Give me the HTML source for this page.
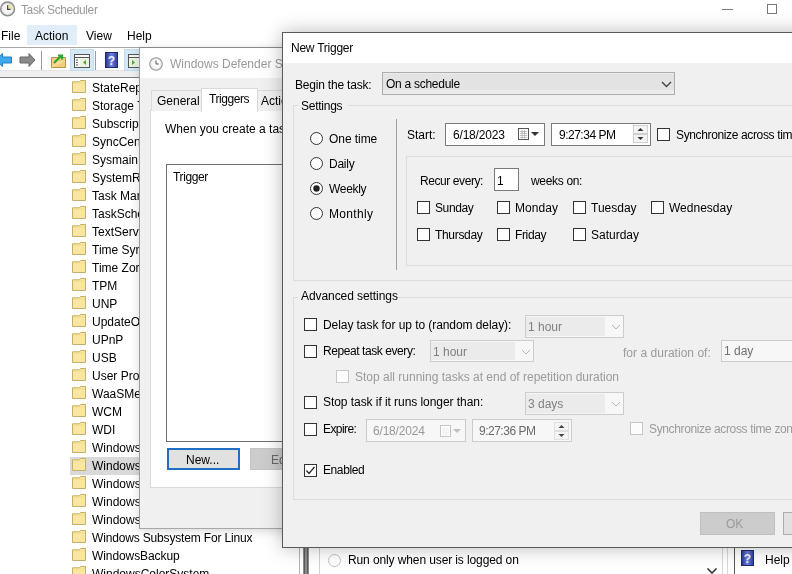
<!DOCTYPE html><html><head><meta charset="utf-8"><style>
html,body{margin:0;padding:0}
body{width:792px;height:574px;overflow:hidden;position:relative;background:#fff;font-family:"Liberation Sans",sans-serif}
.t{position:absolute;white-space:nowrap;will-change:transform;font-size:12px;line-height:14px;font-family:"Liberation Sans",sans-serif}
.z{position:absolute;overflow:hidden}
</style></head><body>
<svg style="position:absolute;left:0;top:1px" width="17" height="17"><circle cx="7.6" cy="7.9" r="6.9" fill="#dcdcdc" stroke="#8c8c8c" stroke-width="1.4"/><circle cx="7.6" cy="7.9" r="5.3" fill="#f4f4f4"/><path d="M7.6 2.8 A5.1 5.1 0 0 1 12.6 7.9 L7.6 7.9Z" fill="#e9e4a8"/><path d="M7.6 4.3 V8.3 H10.6" stroke="#4a4a4a" stroke-width="1.2" fill="none"/></svg>
<div class="t" style="left:21px;top:3px;color:#999;font-size:12px;letter-spacing:-0.396px;">Task Scheduler</div>
<div style="position:absolute;left:722px;top:9px;width:11px;height:1px;background:#7a7a7a"></div>
<div style="position:absolute;left:767px;top:4px;width:8px;height:8px;border:1px solid #7a7a7a"></div>
<div style="position:absolute;left:27px;top:25px;width:50px;height:20px;background:#e1eef9"></div>
<div class="t" style="left:1px;top:29px;color:#000;font-size:12px;">File</div>
<div class="t" style="left:35px;top:29px;color:#000;font-size:12px;">Action</div>
<div class="t" style="left:86px;top:29px;color:#000;font-size:12px;">View</div>
<div class="t" style="left:127px;top:29px;color:#000;font-size:12px;">Help</div>
<div style="position:absolute;left:0px;top:47px;width:792px;height:1px;background:#a8a8a8"></div>
<div style="position:absolute;left:0px;top:70px;width:792px;height:7px;background:#efefef"></div>
<div style="position:absolute;left:0px;top:77px;width:792px;height:1px;background:#7c7c7c"></div>
<div style="position:absolute;left:0px;top:70px;width:792px;height:1px;background:#e4e4e4"></div>
<svg style="position:absolute;left:-5px;top:52px" width="18" height="16"><path d="M0.5 8 L7.5 1.5 V5 H16.5 V11 H7.5 V14.5 Z" fill="#3ea8ec" stroke="#1a7fc8" stroke-width="1"/></svg>
<svg style="position:absolute;left:19px;top:52px" width="17" height="16"><path d="M16 8 L10 1.5 V5 H1 V11 H10 V14.5 Z" fill="#8a8a8a" stroke="#666" stroke-width="1"/></svg>
<div style="position:absolute;left:41px;top:51px;width:1px;height:19px;background:#9a9a9a"></div>
<svg style="position:absolute;left:51px;top:53px" width="15" height="15"><path d="M0.5 4.5 H14.5 V14.5 H0.5 Z" fill="#f2cf7d" stroke="#b8953e"/><path d="M0.5 14.5 L4 8 H14.5" fill="#f7dc9a" stroke="none"/><path d="M3 10 L10 3 M7 2.5 H11 V6.5" stroke="#2fa82f" stroke-width="2.2" fill="none"/></svg>
<div style="position:absolute;left:70px;top:49px;width:22px;height:20px;background:#d5e8f6;border:1px solid #c2dcf0"></div>
<svg style="position:absolute;left:74px;top:54px" width="17" height="14"><rect x="0.5" y="0.5" width="15" height="13" fill="#f8f8f8" stroke="#555"/><path d="M0.5 3.5 H15.5" stroke="#555"/><rect x="6" y="4.5" width="9" height="8.5" fill="#e8f3e0"/><path d="M12 6 L9 8.5 L12 11Z" fill="#5a9e3a"/><path d="M2 6 H4 M2 8.5 H4 M2 11 H4" stroke="#666"/></svg>
<div style="position:absolute;left:95px;top:51px;width:1px;height:19px;background:#9a9a9a"></div>
<svg style="position:absolute;left:105px;top:52px" width="13" height="16"><defs><linearGradient id="hg" x1="0" x2="1"><stop offset="0" stop-color="#27368a"/><stop offset="0.5" stop-color="#6f82dc"/><stop offset="1" stop-color="#2c3c96"/></linearGradient></defs><rect x="0.5" y="0.5" width="12" height="15" fill="url(#hg)" stroke="#1e2a70"/><text x="6.5" y="12.5" font-family="Liberation Sans" font-weight="bold" font-size="12" fill="#eef0ff" text-anchor="middle">?</text></svg>
<div style="position:absolute;left:124px;top:49px;width:22px;height:20px;background:#d5e8f6;border:1px solid #c2dcf0"></div>
<svg style="position:absolute;left:128px;top:54px" width="17" height="14"><rect x="0.5" y="0.5" width="15" height="13" fill="#f8f8f8" stroke="#555"/><path d="M0.5 3.5 H15.5" stroke="#555"/><rect x="1" y="4.5" width="9" height="8.5" fill="#e8f3e0"/><path d="M4 6 L7 8.5 L4 11Z" fill="#5a9e3a"/></svg>
<div style="position:absolute;left:70px;top:457px;width:70px;height:18px;background:#d9d9d9"></div>
<svg style="position:absolute;left:72px;top:80px" width="15" height="13"><path d="M0.5 1.8 H7.5 L8.5 0.5 H13.5 V12.5 H0.5 Z" fill="#f8e6a2" stroke="#c2b06a"/><path d="M1 3 H13" stroke="#efd987" stroke-width="0.8"/></svg>
<div class="t" style="left:92px;top:81px;color:#000;font-size:12px;">StateRep</div>
<svg style="position:absolute;left:72px;top:98px" width="15" height="13"><path d="M0.5 1.8 H7.5 L8.5 0.5 H13.5 V12.5 H0.5 Z" fill="#f8e6a2" stroke="#c2b06a"/><path d="M1 3 H13" stroke="#efd987" stroke-width="0.8"/></svg>
<div class="t" style="left:92px;top:99px;color:#000;font-size:12px;">Storage T</div>
<svg style="position:absolute;left:72px;top:116px" width="15" height="13"><path d="M0.5 1.8 H7.5 L8.5 0.5 H13.5 V12.5 H0.5 Z" fill="#f8e6a2" stroke="#c2b06a"/><path d="M1 3 H13" stroke="#efd987" stroke-width="0.8"/></svg>
<div class="t" style="left:92px;top:117px;color:#000;font-size:12px;">Subscript</div>
<svg style="position:absolute;left:72px;top:134px" width="15" height="13"><path d="M0.5 1.8 H7.5 L8.5 0.5 H13.5 V12.5 H0.5 Z" fill="#f8e6a2" stroke="#c2b06a"/><path d="M1 3 H13" stroke="#efd987" stroke-width="0.8"/></svg>
<div class="t" style="left:92px;top:135px;color:#000;font-size:12px;">SyncCen</div>
<svg style="position:absolute;left:72px;top:152px" width="15" height="13"><path d="M0.5 1.8 H7.5 L8.5 0.5 H13.5 V12.5 H0.5 Z" fill="#f8e6a2" stroke="#c2b06a"/><path d="M1 3 H13" stroke="#efd987" stroke-width="0.8"/></svg>
<div class="t" style="left:92px;top:153px;color:#000;font-size:12px;">Sysmain</div>
<svg style="position:absolute;left:72px;top:170px" width="15" height="13"><path d="M0.5 1.8 H7.5 L8.5 0.5 H13.5 V12.5 H0.5 Z" fill="#f8e6a2" stroke="#c2b06a"/><path d="M1 3 H13" stroke="#efd987" stroke-width="0.8"/></svg>
<div class="t" style="left:92px;top:171px;color:#000;font-size:12px;">SystemR</div>
<svg style="position:absolute;left:72px;top:188px" width="15" height="13"><path d="M0.5 1.8 H7.5 L8.5 0.5 H13.5 V12.5 H0.5 Z" fill="#f8e6a2" stroke="#c2b06a"/><path d="M1 3 H13" stroke="#efd987" stroke-width="0.8"/></svg>
<div class="t" style="left:92px;top:189px;color:#000;font-size:12px;">Task Mar</div>
<svg style="position:absolute;left:72px;top:206px" width="15" height="13"><path d="M0.5 1.8 H7.5 L8.5 0.5 H13.5 V12.5 H0.5 Z" fill="#f8e6a2" stroke="#c2b06a"/><path d="M1 3 H13" stroke="#efd987" stroke-width="0.8"/></svg>
<div class="t" style="left:92px;top:207px;color:#000;font-size:12px;">TaskSche</div>
<svg style="position:absolute;left:72px;top:224px" width="15" height="13"><path d="M0.5 1.8 H7.5 L8.5 0.5 H13.5 V12.5 H0.5 Z" fill="#f8e6a2" stroke="#c2b06a"/><path d="M1 3 H13" stroke="#efd987" stroke-width="0.8"/></svg>
<div class="t" style="left:92px;top:225px;color:#000;font-size:12px;">TextServi</div>
<svg style="position:absolute;left:72px;top:242px" width="15" height="13"><path d="M0.5 1.8 H7.5 L8.5 0.5 H13.5 V12.5 H0.5 Z" fill="#f8e6a2" stroke="#c2b06a"/><path d="M1 3 H13" stroke="#efd987" stroke-width="0.8"/></svg>
<div class="t" style="left:92px;top:243px;color:#000;font-size:12px;">Time Syn</div>
<svg style="position:absolute;left:72px;top:260px" width="15" height="13"><path d="M0.5 1.8 H7.5 L8.5 0.5 H13.5 V12.5 H0.5 Z" fill="#f8e6a2" stroke="#c2b06a"/><path d="M1 3 H13" stroke="#efd987" stroke-width="0.8"/></svg>
<div class="t" style="left:92px;top:261px;color:#000;font-size:12px;">Time Zor</div>
<svg style="position:absolute;left:72px;top:278px" width="15" height="13"><path d="M0.5 1.8 H7.5 L8.5 0.5 H13.5 V12.5 H0.5 Z" fill="#f8e6a2" stroke="#c2b06a"/><path d="M1 3 H13" stroke="#efd987" stroke-width="0.8"/></svg>
<div class="t" style="left:92px;top:279px;color:#000;font-size:12px;">TPM</div>
<svg style="position:absolute;left:72px;top:296px" width="15" height="13"><path d="M0.5 1.8 H7.5 L8.5 0.5 H13.5 V12.5 H0.5 Z" fill="#f8e6a2" stroke="#c2b06a"/><path d="M1 3 H13" stroke="#efd987" stroke-width="0.8"/></svg>
<div class="t" style="left:92px;top:297px;color:#000;font-size:12px;">UNP</div>
<svg style="position:absolute;left:72px;top:314px" width="15" height="13"><path d="M0.5 1.8 H7.5 L8.5 0.5 H13.5 V12.5 H0.5 Z" fill="#f8e6a2" stroke="#c2b06a"/><path d="M1 3 H13" stroke="#efd987" stroke-width="0.8"/></svg>
<div class="t" style="left:92px;top:315px;color:#000;font-size:12px;">UpdateO</div>
<svg style="position:absolute;left:72px;top:332px" width="15" height="13"><path d="M0.5 1.8 H7.5 L8.5 0.5 H13.5 V12.5 H0.5 Z" fill="#f8e6a2" stroke="#c2b06a"/><path d="M1 3 H13" stroke="#efd987" stroke-width="0.8"/></svg>
<div class="t" style="left:92px;top:333px;color:#000;font-size:12px;">UPnP</div>
<svg style="position:absolute;left:72px;top:350px" width="15" height="13"><path d="M0.5 1.8 H7.5 L8.5 0.5 H13.5 V12.5 H0.5 Z" fill="#f8e6a2" stroke="#c2b06a"/><path d="M1 3 H13" stroke="#efd987" stroke-width="0.8"/></svg>
<div class="t" style="left:92px;top:351px;color:#000;font-size:12px;">USB</div>
<svg style="position:absolute;left:72px;top:368px" width="15" height="13"><path d="M0.5 1.8 H7.5 L8.5 0.5 H13.5 V12.5 H0.5 Z" fill="#f8e6a2" stroke="#c2b06a"/><path d="M1 3 H13" stroke="#efd987" stroke-width="0.8"/></svg>
<div class="t" style="left:92px;top:369px;color:#000;font-size:12px;">User Prof</div>
<svg style="position:absolute;left:72px;top:386px" width="15" height="13"><path d="M0.5 1.8 H7.5 L8.5 0.5 H13.5 V12.5 H0.5 Z" fill="#f8e6a2" stroke="#c2b06a"/><path d="M1 3 H13" stroke="#efd987" stroke-width="0.8"/></svg>
<div class="t" style="left:92px;top:387px;color:#000;font-size:12px;">WaaSMe</div>
<svg style="position:absolute;left:72px;top:404px" width="15" height="13"><path d="M0.5 1.8 H7.5 L8.5 0.5 H13.5 V12.5 H0.5 Z" fill="#f8e6a2" stroke="#c2b06a"/><path d="M1 3 H13" stroke="#efd987" stroke-width="0.8"/></svg>
<div class="t" style="left:92px;top:405px;color:#000;font-size:12px;">WCM</div>
<svg style="position:absolute;left:72px;top:422px" width="15" height="13"><path d="M0.5 1.8 H7.5 L8.5 0.5 H13.5 V12.5 H0.5 Z" fill="#f8e6a2" stroke="#c2b06a"/><path d="M1 3 H13" stroke="#efd987" stroke-width="0.8"/></svg>
<div class="t" style="left:92px;top:423px;color:#000;font-size:12px;">WDI</div>
<svg style="position:absolute;left:72px;top:440px" width="15" height="13"><path d="M0.5 1.8 H7.5 L8.5 0.5 H13.5 V12.5 H0.5 Z" fill="#f8e6a2" stroke="#c2b06a"/><path d="M1 3 H13" stroke="#efd987" stroke-width="0.8"/></svg>
<div class="t" style="left:92px;top:441px;color:#000;font-size:12px;">Windows</div>
<svg style="position:absolute;left:72px;top:458px" width="15" height="13"><path d="M0.5 1.8 H7.5 L8.5 0.5 H13.5 V12.5 H0.5 Z" fill="#f8e6a2" stroke="#c2b06a"/><path d="M1 3 H13" stroke="#efd987" stroke-width="0.8"/></svg>
<div class="t" style="left:92px;top:459px;color:#000;font-size:12px;">Windows</div>
<svg style="position:absolute;left:72px;top:476px" width="15" height="13"><path d="M0.5 1.8 H7.5 L8.5 0.5 H13.5 V12.5 H0.5 Z" fill="#f8e6a2" stroke="#c2b06a"/><path d="M1 3 H13" stroke="#efd987" stroke-width="0.8"/></svg>
<div class="t" style="left:92px;top:477px;color:#000;font-size:12px;">Windows</div>
<svg style="position:absolute;left:72px;top:494px" width="15" height="13"><path d="M0.5 1.8 H7.5 L8.5 0.5 H13.5 V12.5 H0.5 Z" fill="#f8e6a2" stroke="#c2b06a"/><path d="M1 3 H13" stroke="#efd987" stroke-width="0.8"/></svg>
<div class="t" style="left:92px;top:495px;color:#000;font-size:12px;">Windows</div>
<svg style="position:absolute;left:72px;top:512px" width="15" height="13"><path d="M0.5 1.8 H7.5 L8.5 0.5 H13.5 V12.5 H0.5 Z" fill="#f8e6a2" stroke="#c2b06a"/><path d="M1 3 H13" stroke="#efd987" stroke-width="0.8"/></svg>
<div class="t" style="left:92px;top:513px;color:#000;font-size:12px;">Windows</div>
<svg style="position:absolute;left:72px;top:530px" width="15" height="13"><path d="M0.5 1.8 H7.5 L8.5 0.5 H13.5 V12.5 H0.5 Z" fill="#f8e6a2" stroke="#c2b06a"/><path d="M1 3 H13" stroke="#efd987" stroke-width="0.8"/></svg>
<div class="t" style="left:92px;top:531px;color:#000;font-size:12px;letter-spacing:-0.164px;">Windows Subsystem For Linux</div>
<svg style="position:absolute;left:72px;top:548px" width="15" height="13"><path d="M0.5 1.8 H7.5 L8.5 0.5 H13.5 V12.5 H0.5 Z" fill="#f8e6a2" stroke="#c2b06a"/><path d="M1 3 H13" stroke="#efd987" stroke-width="0.8"/></svg>
<div class="t" style="left:92px;top:549px;color:#000;font-size:12px;letter-spacing:-0.086px;">WindowsBackup</div>
<svg style="position:absolute;left:72px;top:566px" width="15" height="13"><path d="M0.5 1.8 H7.5 L8.5 0.5 H13.5 V12.5 H0.5 Z" fill="#f8e6a2" stroke="#c2b06a"/><path d="M1 3 H13" stroke="#efd987" stroke-width="0.8"/></svg>
<div class="t" style="left:92px;top:567px;color:#000;font-size:12px;">WindowsColorSystem</div>
<div style="position:absolute;left:299px;top:547px;width:1px;height:27px;background:#b4b4b4"></div>
<div style="position:absolute;left:303px;top:547px;width:6px;height:27px;background:#8c8c8c"></div>
<div style="position:absolute;left:304px;top:547px;width:1px;height:27px;background:#5a5a5a"></div>
<div style="position:absolute;left:307px;top:547px;width:1px;height:27px;background:#5a5a5a"></div>
<div style="position:absolute;left:319px;top:547px;width:1px;height:27px;background:#d0d0d0"></div>
<svg style="position:absolute;left:328px;top:554px" width="13" height="13"><circle cx="6.5" cy="6.5" r="6" fill="#fff" stroke="#c0c0c0" stroke-width="1"/></svg>
<div class="t" style="left:348px;top:553px;color:#000;font-size:12px;letter-spacing:-0.110px;">Run only when user is logged on</div>
<div style="position:absolute;left:722px;top:547px;width:1px;height:27px;background:#d8d8d8"></div>
<div style="position:absolute;left:727px;top:547px;width:1px;height:27px;background:#d8d8d8"></div>
<div style="position:absolute;left:734px;top:547px;width:1px;height:27px;background:#555"></div>
<svg style="position:absolute;left:706px;top:567px" width="12" height="8"><path d="M1.5 1.5 L6 6 L10.5 1.5" stroke="#333" stroke-width="1.6" fill="none"/></svg>
<svg style="position:absolute;left:741px;top:550px" width="13" height="16"><defs><linearGradient id="hg" x1="0" x2="1"><stop offset="0" stop-color="#27368a"/><stop offset="0.5" stop-color="#6f82dc"/><stop offset="1" stop-color="#2c3c96"/></linearGradient></defs><rect x="0.5" y="0.5" width="12" height="15" fill="url(#hg)" stroke="#1e2a70"/><text x="6.5" y="12.5" font-family="Liberation Sans" font-weight="bold" font-size="12" fill="#eef0ff" text-anchor="middle">?</text></svg>
<div class="t" style="left:765px;top:553px;color:#000;font-size:12px;">Help</div>
<div class="z" style="left:139px;top:47px;width:660px;height:480px;background:#f0f0f0;border-left:1px solid #9c9c9c;border-top:1px solid #8a8a8a;border-bottom:1px solid #a8a8a8;box-shadow:0 2px 9px rgba(0,0,0,0.16)">
<div style="position:absolute;left:0;top:0;width:100%;height:30px;background:#fff"></div>
<svg style="position:absolute;left:9px;top:9px" width="15" height="15"><circle cx="7" cy="7" r="6.3" fill="#e8e8e8" stroke="#9a9a9a" stroke-width="1.1"/><circle cx="7" cy="7" r="4.8" fill="#fafafa"/><path d="M7 3.5 V7 H9.8" stroke="#555" stroke-width="1" fill="none"/></svg>
<div class="t" style="left:30px;top:9px;color:#999;">Windows Defender Scheduled Scan</div>
<div style="position:absolute;left:10px;top:62px;width:600px;height:376px;background:#fff;border:1px solid #d9d9d9"></div>
<div style="position:absolute;left:11px;top:42px;width:50px;height:20px;background:#f0f0f0;border:1px solid #d9d9d9;border-bottom:none"></div>
<div style="position:absolute;left:117px;top:42px;width:60px;height:20px;background:#f0f0f0;border:1px solid #d9d9d9;border-bottom:none"></div>
<div style="position:absolute;left:61px;top:40px;width:55px;height:23px;background:#fff;border:1px solid #d9d9d9;border-bottom:none"></div>
<div class="t" style="left:17px;top:46px;color:#000;">General</div>
<div class="t" style="left:69px;top:44px;color:#000;letter-spacing:-0.447px;">Triggers</div>
<div class="t" style="left:121px;top:46px;color:#000;">Actions</div>
<div class="t" style="left:25px;top:74px;color:#000;">When you create a task, you can</div>
<div style="position:absolute;left:26px;top:116px;width:600px;height:276px;background:#fff;border:1px solid #6f6f6f"></div>
<div class="t" style="left:33px;top:122px;color:#000;letter-spacing:-0.368px;">Trigger</div>
<div style="position:absolute;left:27px;top:400px;width:73px;height:22px;background:#e1e1e1;border:2px solid #1f6fc5;box-sizing:border-box"></div>
<div class="t" style="left:46px;top:405px;color:#000;">New...</div>
<div style="position:absolute;left:110px;top:400px;width:80px;height:22px;background:#cccccc;border:1px solid #c4c4c4;box-sizing:border-box"></div>
<div class="t" style="left:131px;top:405px;color:#666;">Edit...</div>
</div>
<div class="z" style="left:282px;top:32px;width:560px;height:514px;background:#f0f0f0;border:1px solid #5a5a5a;box-shadow:0 0 18px rgba(0,0,0,0.28)">
<div style="position:absolute;left:0px;top:0px;width:560px;height:30px;background:#fff"></div>
<div class="t" style="left:8px;top:8px;color:#000;letter-spacing:-0.244px;">New Trigger</div>
<div class="t" style="left:12px;top:45px;color:#000;letter-spacing:-0.199px;">Begin the task:</div>
<div style="position:absolute;left:99px;top:39px;width:293px;height:23px;background:#e3e3e3;border:1px solid #adadad;box-sizing:border-box;box-shadow:inset 0 1px 0 #ececec, inset 0 -4px 0 #ebebeb"></div>
<div class="t" style="left:103px;top:44px;color:#000;letter-spacing:-0.269px;">On a schedule</div>
<svg style="position:absolute;left:378px;top:48px" width="11" height="7"><path d="M1 1 L5.5 5.5 L10 1" stroke="#444" stroke-width="1.4" fill="none"/></svg>
<div style="position:absolute;left:10px;top:72px;width:520px;height:176px;border:1px solid #dcdcdc;box-sizing:border-box"></div>
<div style="position:absolute;left:15px;top:65px;width:50px;height:14px;background:#f0f0f0"></div>
<div class="t" style="left:18px;top:66px;color:#000;letter-spacing:-0.257px;">Settings</div>
<svg style="position:absolute;left:27px;top:99px" width="13" height="13"><circle cx="6.5" cy="6.5" r="6" fill="#fff" stroke="#333" stroke-width="1"/></svg>
<div class="t" style="left:46px;top:99px;color:#000;letter-spacing:-0.061px;">One time</div>
<svg style="position:absolute;left:27px;top:124px" width="13" height="13"><circle cx="6.5" cy="6.5" r="6" fill="#fff" stroke="#333" stroke-width="1"/></svg>
<div class="t" style="left:46px;top:124px;color:#000;letter-spacing:-0.254px;">Daily</div>
<svg style="position:absolute;left:27px;top:149px" width="13" height="13"><circle cx="6.5" cy="6.5" r="6" fill="#fff" stroke="#333" stroke-width="1"/><circle cx="6.5" cy="6.5" r="3.2" fill="#222"/></svg>
<div class="t" style="left:46px;top:149px;color:#000;letter-spacing:-0.321px;">Weekly</div>
<svg style="position:absolute;left:27px;top:174px" width="13" height="13"><circle cx="6.5" cy="6.5" r="6" fill="#fff" stroke="#333" stroke-width="1"/></svg>
<div class="t" style="left:46px;top:174px;color:#000;letter-spacing:0.324px;">Monthly</div>
<div style="position:absolute;left:113px;top:86px;width:1px;height:151px;background:#a0a0a0"></div>
<div class="t" style="left:124px;top:95px;color:#000;">Start:</div>
<div style="position:absolute;left:162px;top:90px;width:100px;height:23px;background:#fff;border:1px solid #7a7a7a;box-sizing:border-box"></div>
<div class="t" style="left:170px;top:95px;color:#000;letter-spacing:-0.188px;">6/18/2023</div>
<svg style="position:absolute;left:235px;top:95px" width="12" height="13"><rect x="0.5" y="0.5" width="10" height="11" fill="#fff" stroke="#555"/><path d="M2 3.5 H9 M2 5.5 H9 M2 7.5 H9 M2 9.5 H9 M4 2 V10.5 M6.5 2 V10.5" stroke="#b0b0b0" stroke-width="0.8"/></svg>
<svg style="position:absolute;left:248px;top:99px" width="9" height="5"><path d="M0 0 H8 L4 4Z" fill="#333"/></svg>
<div style="position:absolute;left:268px;top:90px;width:100px;height:23px;background:#fff;border:1px solid #7a7a7a;box-sizing:border-box"></div>
<div class="t" style="left:276px;top:95px;color:#000;letter-spacing:-0.498px;">9:27:34 PM</div>
<svg style="position:absolute;left:350px;top:92px" width="16" height="18"><rect x="0.5" y="0.5" width="14" height="8" fill="#f4f4f4" stroke="#cfcfcf"/><rect x="0.5" y="9.5" width="14" height="8" fill="#f4f4f4" stroke="#cfcfcf"/><path d="M4.5 6 H10.5 L7.5 3Z" fill="#333"/><path d="M4.5 12 H10.5 L7.5 15Z" fill="#333"/></svg>
<div style="position:absolute;left:374px;top:95px;width:11px;height:11px;border:1px solid #333;background:#fff"></div>
<div class="t" style="left:393px;top:95px;color:#000;letter-spacing:-0.361px;">Synchronize across time zones</div>
<div style="position:absolute;left:123px;top:123px;width:420px;height:110px;border:1px solid #dcdcdc;box-sizing:border-box"></div>
<div class="t" style="left:137px;top:141px;color:#000;letter-spacing:-0.419px;">Recur every:</div>
<div style="position:absolute;left:211px;top:135px;width:25px;height:23px;background:#fff;border:1px solid #7a7a7a;box-sizing:border-box"></div>
<div class="t" style="left:214px;top:141px;color:#000;">1</div>
<div class="t" style="left:248px;top:141px;color:#000;letter-spacing:-0.326px;">weeks on:</div>
<div style="position:absolute;left:134px;top:168px;width:11px;height:11px;border:1px solid #333;background:#fff"></div>
<div class="t" style="left:152px;top:168px;color:#000;letter-spacing:-0.401px;">Sunday</div>
<div style="position:absolute;left:214px;top:168px;width:11px;height:11px;border:1px solid #333;background:#fff"></div>
<div class="t" style="left:232px;top:168px;color:#000;letter-spacing:0.083px;">Monday</div>
<div style="position:absolute;left:290px;top:168px;width:11px;height:11px;border:1px solid #333;background:#fff"></div>
<div class="t" style="left:308px;top:168px;color:#000;">Tuesday</div>
<div style="position:absolute;left:368px;top:168px;width:11px;height:11px;border:1px solid #333;background:#fff"></div>
<div class="t" style="left:386px;top:168px;color:#000;">Wednesday</div>
<div style="position:absolute;left:134px;top:195px;width:11px;height:11px;border:1px solid #333;background:#fff"></div>
<div class="t" style="left:152px;top:195px;color:#000;letter-spacing:-0.316px;">Thursday</div>
<div style="position:absolute;left:214px;top:195px;width:11px;height:11px;border:1px solid #333;background:#fff"></div>
<div class="t" style="left:232px;top:195px;color:#000;letter-spacing:-0.357px;">Friday</div>
<div style="position:absolute;left:290px;top:195px;width:11px;height:11px;border:1px solid #333;background:#fff"></div>
<div class="t" style="left:308px;top:195px;color:#000;">Saturday</div>
<div style="position:absolute;left:10px;top:264px;width:520px;height:203px;border:1px solid #dcdcdc;box-sizing:border-box"></div>
<div style="position:absolute;left:15px;top:257px;width:100px;height:14px;background:#f0f0f0"></div>
<div class="t" style="left:18px;top:256px;color:#000;letter-spacing:-0.074px;">Advanced settings</div>
<div style="position:absolute;left:21px;top:285px;width:11px;height:11px;border:1px solid #333;background:#fff"></div>
<div class="t" style="left:40px;top:285px;color:#000;letter-spacing:-0.068px;">Delay task for up to (random delay):</div>
<div style="position:absolute;left:242px;top:282px;width:99px;height:23px;background:#f7f7f7;border:1px solid #cccccc;box-sizing:border-box"></div>
<div style="position:absolute;left:243px;top:284px;width:79px;height:19px;background:#ebebeb"></div>
<div class="t" style="left:245px;top:287px;color:#808080;">1 hour</div>
<svg style="position:absolute;left:328px;top:291px" width="10" height="6"><path d="M1 1 L5 5 L9 1" stroke="#b5b5b5" stroke-width="1" fill="none"/></svg>
<div style="position:absolute;left:21px;top:312px;width:11px;height:11px;border:1px solid #333;background:#fff"></div>
<div class="t" style="left:40px;top:311px;color:#000;letter-spacing:-0.426px;">Repeat task every:</div>
<div style="position:absolute;left:147px;top:307px;width:104px;height:22px;background:#f7f7f7;border:1px solid #cccccc;box-sizing:border-box"></div>
<div style="position:absolute;left:148px;top:309px;width:84px;height:18px;background:#ebebeb"></div>
<div class="t" style="left:150px;top:312px;color:#808080;">1 hour</div>
<svg style="position:absolute;left:238px;top:316px" width="10" height="6"><path d="M1 1 L5 5 L9 1" stroke="#b5b5b5" stroke-width="1" fill="none"/></svg>
<div class="t" style="left:340px;top:313px;color:#9a9a9a;letter-spacing:0.023px;">for a duration of:</div>
<div style="position:absolute;left:438px;top:307px;width:100px;height:22px;background:#f7f7f7;border:1px solid #cccccc;box-sizing:border-box"></div>
<div class="t" style="left:441px;top:311px;color:#707070;">1 day</div>
<div style="position:absolute;left:53px;top:337px;width:11px;height:11px;border:1px solid #c6c6c6;background:#fcfcfc"></div>
<div class="t" style="left:72px;top:337px;color:#9a9a9a;letter-spacing:-0.003px;">Stop all running tasks at end of repetition duration</div>
<div style="position:absolute;left:21px;top:363px;width:11px;height:11px;border:1px solid #333;background:#fff"></div>
<div class="t" style="left:40px;top:362px;color:#000;letter-spacing:-0.057px;">Stop task if it runs longer than:</div>
<div style="position:absolute;left:242px;top:359px;width:99px;height:23px;background:#f7f7f7;border:1px solid #cccccc;box-sizing:border-box"></div>
<div style="position:absolute;left:243px;top:361px;width:79px;height:19px;background:#ebebeb"></div>
<div class="t" style="left:245px;top:364px;color:#808080;">3 days</div>
<svg style="position:absolute;left:328px;top:368px" width="10" height="6"><path d="M1 1 L5 5 L9 1" stroke="#b5b5b5" stroke-width="1" fill="none"/></svg>
<div style="position:absolute;left:21px;top:390px;width:11px;height:11px;border:1px solid #333;background:#fff"></div>
<div class="t" style="left:40px;top:389px;color:#000;letter-spacing:-0.566px;">Expire:</div>
<div style="position:absolute;left:83px;top:386px;width:100px;height:23px;background:#f7f7f7;border:1px solid #cccccc;box-sizing:border-box"></div>
<div class="t" style="left:90px;top:391px;color:#9a9a9a;letter-spacing:-0.188px;">6/18/2024</div>
<svg style="position:absolute;left:157px;top:392px" width="12" height="13"><rect x="0.5" y="0.5" width="10" height="11" fill="#fff" stroke="#c4c4c4"/><path d="M2 3.5 H9 M2 5.5 H9 M2 7.5 H9 M2 9.5 H9 M4 2 V10.5 M6.5 2 V10.5" stroke="#eeeeee" stroke-width="0.8"/></svg>
<svg style="position:absolute;left:170px;top:396px" width="9" height="5"><path d="M0 0 H8 L4 4Z" fill="#c0c0c0"/></svg>
<div style="position:absolute;left:189px;top:386px;width:100px;height:23px;background:#f7f7f7;border:1px solid #cccccc;box-sizing:border-box"></div>
<div class="t" style="left:196px;top:391px;color:#6a6a6a;letter-spacing:-0.498px;">9:27:36 PM</div>
<svg style="position:absolute;left:271px;top:389px" width="16" height="18"><rect x="0.5" y="0.5" width="14" height="8" fill="#f4f4f4" stroke="#e0e0e0"/><rect x="0.5" y="9.5" width="14" height="8" fill="#f4f4f4" stroke="#e0e0e0"/><path d="M4.5 6 H10.5 L7.5 3Z" fill="#444"/><path d="M4.5 12 H10.5 L7.5 15Z" fill="#444"/></svg>
<div style="position:absolute;left:347px;top:389px;width:11px;height:11px;border:1px solid #c6c6c6;background:#fcfcfc"></div>
<div class="t" style="left:366px;top:389px;color:#9a9a9a;letter-spacing:-0.361px;">Synchronize across time zones</div>
<div style="position:absolute;left:21px;top:431px;width:11px;height:11px;border:1px solid #333;background:#fff"></div>
<svg style="position:absolute;left:21px;top:431px" width="13" height="13"><path d="M2.5 6.5 L5 9.5 L10.5 3" stroke="#222" stroke-width="1.2" fill="none"/></svg>
<div class="t" style="left:40px;top:430px;color:#000;letter-spacing:-0.407px;">Enabled</div>
<div style="position:absolute;left:417px;top:479px;width:75px;height:23px;background:#cccccc;border:1px solid #bfbfbf;box-sizing:border-box"></div>
<div class="t" style="left:443px;top:484px;color:#9a9a9a;">OK</div>
<div style="position:absolute;left:500px;top:479px;width:75px;height:23px;background:#e1e1e1;border:1px solid #adadad;box-sizing:border-box"></div>
</div>
</body></html>
